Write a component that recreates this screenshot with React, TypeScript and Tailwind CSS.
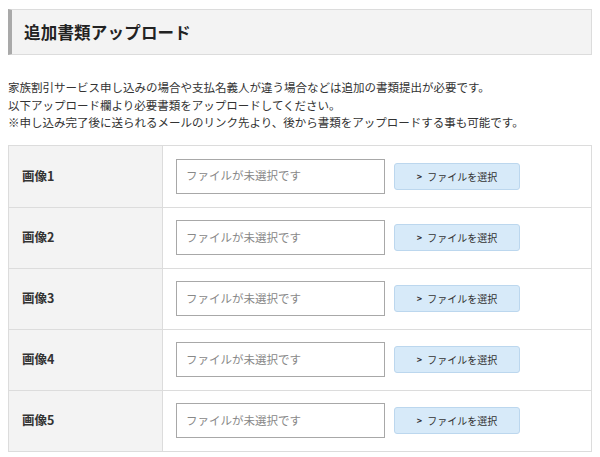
const ROWS = ['画像1', '画像2', '画像3', '画像4', '画像5']

const FONT = { fontFamily: '"Noto Sans CJK JP", "Liberation Sans", sans-serif' }

export default function App() {
  return (
    <div className="w-[600px] h-[457px] bg-white px-2 pt-[9px] text-[#333]" style={FONT}>
      {/* 見出し */}
      <div className="h-[46px] flex items-center bg-[#f3f3f3] border border-[#dcdcdc] border-l-[4px] border-l-[#a9a9a9] pl-[12px]">
        <h2 className="text-[16.5px] font-bold text-[#222] tracking-[0.2px]">追加書類アップロード</h2>
      </div>

      {/* 説明文 */}
      <div className="mt-[24px] text-[11.5px] leading-[17.5px] text-[#333]">
        <p>家族割引サービス申し込みの場合や支払名義人が違う場合などは追加の書類提出が必要です。</p>
        <p>以下アップロード欄より必要書類をアップロードしてください。</p>
        <p>※申し込み完了後に送られるメールのリンク先より、後から書類をアップロードする事も可能です。</p>
      </div>

      {/* アップロード欄 */}
      <div className="mt-[13px] border border-[#dcdcdc]">
        {ROWS.map((label, i) => (
          <div
            key={label}
            className={`flex h-[61px] ${i > 0 ? 'border-t border-[#dcdcdc]' : ''}`}
          >
            <div className="w-[154px] shrink-0 bg-[#f3f3f3] border-r border-[#dcdcdc] flex items-center pl-[13px]">
              <span className="text-[12.5px] font-bold text-[#333]">{label}</span>
            </div>
            <div className="flex-1 flex items-center pl-[13px] gap-[9px]">
              <div className="w-[209px] h-[35px] border border-[#a8a8a8] bg-white flex items-center pl-[9px]">
                <span className="text-[11.5px] text-[#888]">ファイルが未選択です</span>
              </div>
              <button className="w-[126px] h-[27px] rounded-[3px] bg-[#d7eaf9] border border-[#bcd7ee] flex items-center justify-center gap-[5px] text-[10px] text-[#333]">
                <span className="text-[9px] font-bold leading-none">&gt;</span>
                <span>ファイルを選択</span>
              </button>
            </div>
          </div>
        ))}
      </div>
    </div>
  )
}
